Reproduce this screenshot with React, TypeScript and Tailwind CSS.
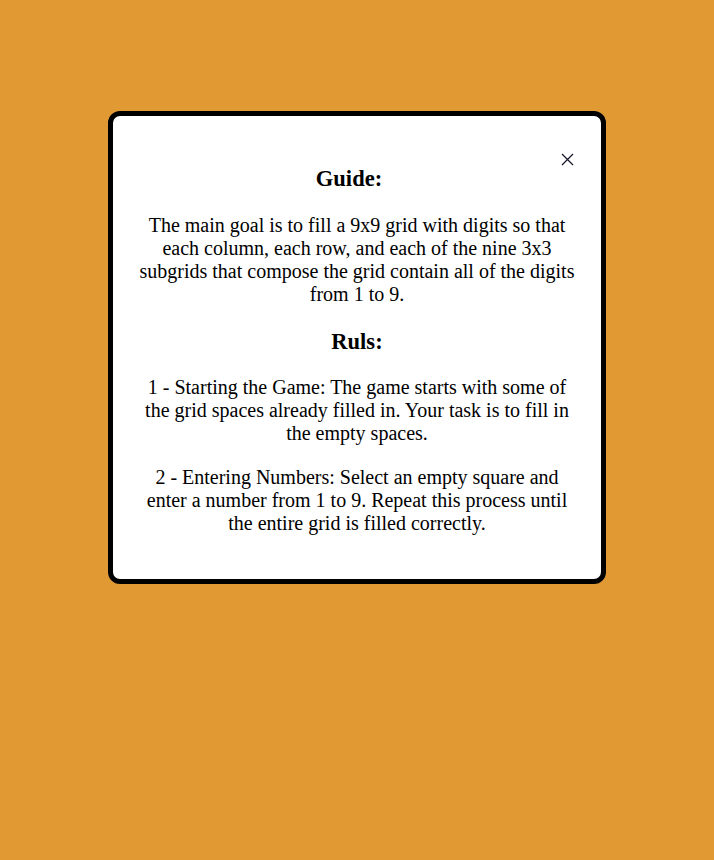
import React from "react";

export default function App() {
  return (
    <div className="min-h-screen bg-[#e09933] flex justify-center pt-[111px] font-['Liberation_Serif','Times_New_Roman',serif] text-black">
      <div className="relative w-[498px] h-[473px] self-start bg-white border-[5px] border-black rounded-[12px] px-[24px] pt-[50px] text-center">
        {/* Close button */}
        <button className="absolute top-[35px] right-[26px] w-[16px] h-[16px] flex items-center justify-center">
          <svg width="13" height="13" viewBox="0 0 13 13" fill="none">
            <path d="M1 1l11 11M12 1L1 12" stroke="#141428" strokeWidth="1.2" />
          </svg>
        </button>

        <h3 className="pr-[16px] text-[22.5px] leading-[26px] font-bold">Guide:</h3>
        <p className="mt-[22px] text-[20px] leading-[23px]">
          The main goal is to fill a 9x9 grid with digits so that each column, each row, and each of the nine 3x3
          subgrids that compose the grid contain all of the digits from 1 to 9.
        </p>

        <h3 className="mt-[23px] text-[22.5px] leading-[26px] font-bold">Ruls:</h3>
        <p className="mt-[21px] text-[20px] leading-[23px]">
          1 - Starting the Game: The game starts with some of the grid spaces already filled in. Your task is to fill
          in the empty spaces.
        </p>
        <p className="mt-[21px] text-[20px] leading-[23px]">
          2 - Entering Numbers: Select an empty square and enter a number from 1 to 9. Repeat this process until the
          entire grid is filled correctly.
        </p>
      </div>
    </div>
  );
}
